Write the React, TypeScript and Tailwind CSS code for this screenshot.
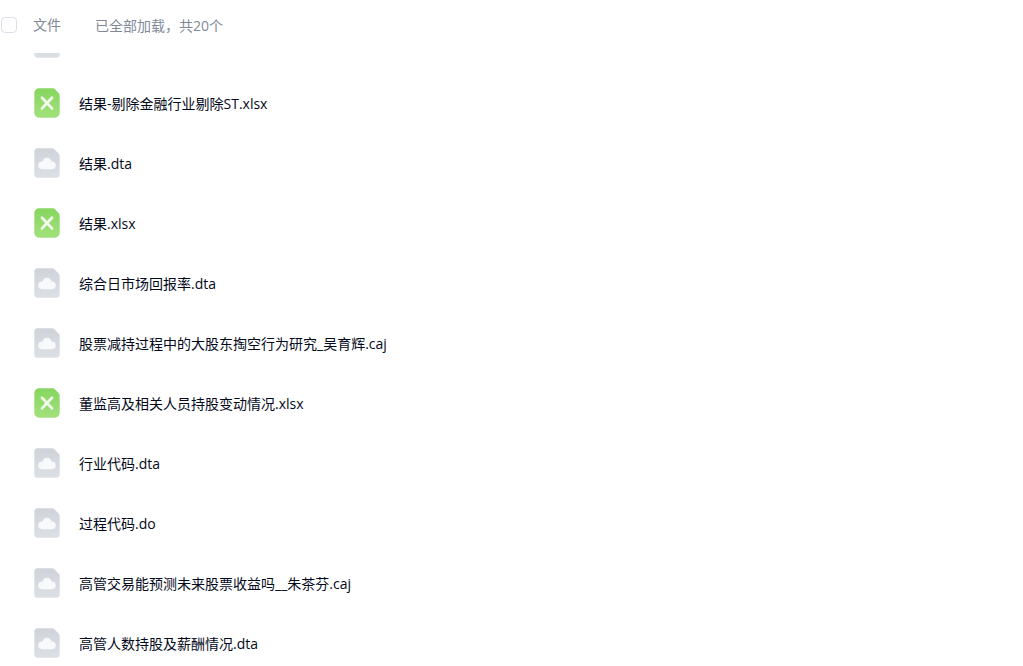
type FileKind = 'sheet' | 'other';

interface FileItem {
  name: string;
  kind: FileKind;
}

const FILES: FileItem[] = [
  { name: '结果-剔除金融行业剔除ST.xlsx', kind: 'sheet' },
  { name: '结果.dta', kind: 'other' },
  { name: '结果.xlsx', kind: 'sheet' },
  { name: '综合日市场回报率.dta', kind: 'other' },
  { name: '股票减持过程中的大股东掏空行为研究_吴育辉.caj', kind: 'other' },
  { name: '董监高及相关人员持股变动情况.xlsx', kind: 'sheet' },
  { name: '行业代码.dta', kind: 'other' },
  { name: '过程代码.do', kind: 'other' },
  { name: '高管交易能预测未来股票收益吗__朱茶芬.caj', kind: 'other' },
  { name: '高管人数持股及薪酬情况.dta', kind: 'other' },
];

function FileIcon({ kind }: { kind: FileKind }) {
  if (kind === 'sheet') {
    return (
      <svg className="h-[30px] w-[26px] shrink-0" viewBox="0 0 26 30" fill="none" aria-hidden="true">
        <defs>
          <linearGradient id="sheet-fill" x1="0" y1="0" x2="0" y2="1">
            <stop stopColor="#86d65f" />
            <stop offset="1" stopColor="#a2e17c" />
          </linearGradient>
        </defs>
        <path
          d="M5 .3H18.8a3 3 0 0 1 2.1.9l3.7 3.8a3.6 3.6 0 0 1 1.1 2.6V25a4.7 4.7 0 0 1-4.7 4.7H5A4.7 4.7 0 0 1 .3 25V5A4.7 4.7 0 0 1 5 .3z"
          fill="url(#sheet-fill)"
        />
        <path d="M8 9.8l10 10.6M18 9.8l-10 10.6" stroke="#f4fcef" strokeWidth="2.7" strokeLinecap="round" />
      </svg>
    );
  }

  return (
    <svg className="h-[30px] w-[26px] shrink-0" viewBox="0 0 26 30" fill="none" aria-hidden="true">
      <defs>
        <linearGradient id="other-fill" x1="0" y1="0" x2="0" y2="1">
          <stop stopColor="#d0d4da" />
          <stop offset="1" stopColor="#dbe0e5" />
        </linearGradient>
      </defs>
      <path
        d="M3.8.3H18.4a2.6 2.6 0 0 1 1.8.8l4.6 4.6a2.8 2.8 0 0 1 .9 2V26.2a3.5 3.5 0 0 1-3.5 3.5H3.8a3.5 3.5 0 0 1-3.5-3.5V3.8A3.5 3.5 0 0 1 3.8.3z"
        fill="url(#other-fill)"
      />
      <path
        d="M8.2 21.2a3.9 3.9 0 0 1-.1-7.8h.5a4.5 4.5 0 0 1 8.8 0h.5a3.9 3.9 0 0 1-.1 7.8z"
        fill="#f7f9fa"
      />
    </svg>
  );
}

export default function App() {
  return (
    <main className="flex h-screen flex-col bg-white font-['Open_Sans','Noto_Sans_CJK_SC',sans-serif] text-sm">
      <header className="flex h-[53px] shrink-0 items-center text-[#818999]">
        <label className="flex items-center gap-4 pb-1">
          <input
            type="checkbox"
            className="m-0 ml-px size-4 appearance-none rounded border border-[#dcdfe8] bg-white checked:bg-[#818999]"
          />
          文件
        </label>
        <p className="ml-[34px] pb-0.5">已全部加载，共20个</p>
      </header>

      <ul className="min-h-0 flex-1 overflow-hidden">
        {/* row scrolled partly under the header */}
        <li className="-mt-10 flex h-[60px] items-center pl-[34px]" aria-hidden="true">
          <FileIcon kind="other" />
        </li>
        {FILES.map((file) => (
          <li key={file.name} className="flex h-[60px] items-center gap-[19px] pl-[34px]">
            <FileIcon kind={file.kind} />
            <a href="#" className="whitespace-nowrap pt-0.5 text-[#03081a]">
              {file.name}
            </a>
          </li>
        ))}
      </ul>
    </main>
  );
}
